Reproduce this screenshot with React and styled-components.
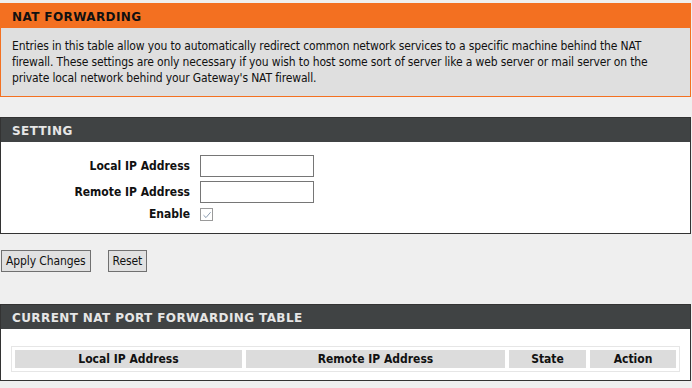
import React from "react";
import styled, { createGlobalStyle } from "styled-components";

const GlobalStyle = createGlobalStyle`
  body {
    margin: 0;
    background: #efefef;
    font-family: "DejaVu Sans Condensed", "DejaVu Sans", sans-serif;
    font-size: 12px;
    color: #111;
  }
`;

function App() {
  return (
    <Page>
      <GlobalStyle />
      <Panel tone="orange">
        <PanelHeader tone="orange">NAT FORWARDING</PanelHeader>
        <Intro>
          Entries in this table allow you to automatically redirect common network services to a specific machine behind the NAT
          <br />
          firewall. These settings are only necessary if you wish to host some sort of server like a web server or mail server on the
          <br />
          private local network behind your Gateway's NAT firewall.
        </Intro>
      </Panel>

      <Panel>
        <PanelHeader>SETTING</PanelHeader>
        <FormGrid>
          <Label>Local IP Address</Label>
          <TextBox type="text" />
          <Label>Remote IP Address</Label>
          <TextBox type="text" />
          <Label>Enable</Label>
          <Check>
            <svg width="10" height="10" viewBox="0 0 10 10">
              <path d="M1.5 5.2 L4 7.6 L8.6 2.2" fill="none" stroke="#8a9bb0" strokeWidth="1" />
            </svg>
          </Check>
        </FormGrid>
      </Panel>

      <ButtonRow>
        <Button>Apply Changes</Button>
        <Button>Reset</Button>
      </ButtonRow>

      <Panel>
        <PanelHeader>CURRENT NAT PORT FORWARDING TABLE</PanelHeader>
        <TableWrap>
          <Table>
            <thead>
              <tr>
                <Th width="227">Local IP Address</Th>
                <Th width="259">Remote IP Address</Th>
                <Th width="77">State</Th>
                <Th>Action</Th>
              </tr>
            </thead>
          </Table>
        </TableWrap>
      </Panel>
    </Page>
  );
}

const Page = styled.div`
  width: 691px;
  padding-top: 3px;
`;

const Panel = styled.div`
  border: 1px solid ${(p) => (p.tone === "orange" ? "#f37021" : "#333")};
  background: ${(p) => (p.tone === "orange" ? "#dfdfdf" : "#fff")};
  margin-bottom: 20px;
`;

const PanelHeader = styled.div`
  height: 24px;
  line-height: 26px;
  padding-left: 11px;
  font-weight: bold;
  font-size: 12px;
  letter-spacing: 0.4px;
  font-family: "DejaVu Sans", sans-serif;
  background: ${(p) => (p.tone === "orange" ? "#f37021" : "#404344")};
  color: ${(p) => (p.tone === "orange" ? "#111" : "#e6e6e6")};
`;

const Intro = styled.div`
  padding: 10px 11px 10px 11px;
  line-height: 16px;
  letter-spacing: -0.14px;
  color: #111;
  white-space: nowrap;
`;

const FormGrid = styled.div`
  display: grid;
  grid-template-columns: 189px auto;
  column-gap: 10px;
  row-gap: 4px;
  align-items: center;
  justify-items: start;
  padding: 13px 0 12px;
`;

const Label = styled.div`
  justify-self: end;
  font-weight: bold;
  font-size: 12px;
`;

const TextBox = styled.input`
  box-sizing: border-box;
  width: 114px;
  height: 22px;
  border: 1px solid #767676;
  margin: 0;
  padding: 0 3px;
  background: #fff;
`;

const Check = styled.span`
  box-sizing: border-box;
  width: 13px;
  height: 13px;
  margin-top: 1px;
  border: 1px solid #9a9a9a;
  background: #fff;
  display: flex;
  align-items: center;
  justify-content: center;
`;

const ButtonRow = styled.div`
  display: flex;
  gap: 17px;
  padding: 0 0 0 1px;
  margin: -4px 0 32px;
`;

const Button = styled.button`
  box-sizing: border-box;
  height: 22px;
  padding: 0 4px;
  border: 1px solid #707070;
  background: #e1e1e1;
  font-family: "DejaVu Sans Condensed", "DejaVu Sans", sans-serif;
  font-size: 12px;
  letter-spacing: -0.1px;
  color: #111;
`;

const TableWrap = styled.div`
  padding: 17px 10px 8px 10px;
`;

const Table = styled.table`
  width: 669px;
  border-collapse: separate;
  border-spacing: 2px;
  border: 1px solid #e6e6e6;
`;

const Th = styled.th`
  background: #dcdcdc;
  height: 18px;
  padding: 0;
  font-size: 12px;
  font-weight: bold;
  text-align: center;
  border: 1px solid #fff;
`;

export default App;
